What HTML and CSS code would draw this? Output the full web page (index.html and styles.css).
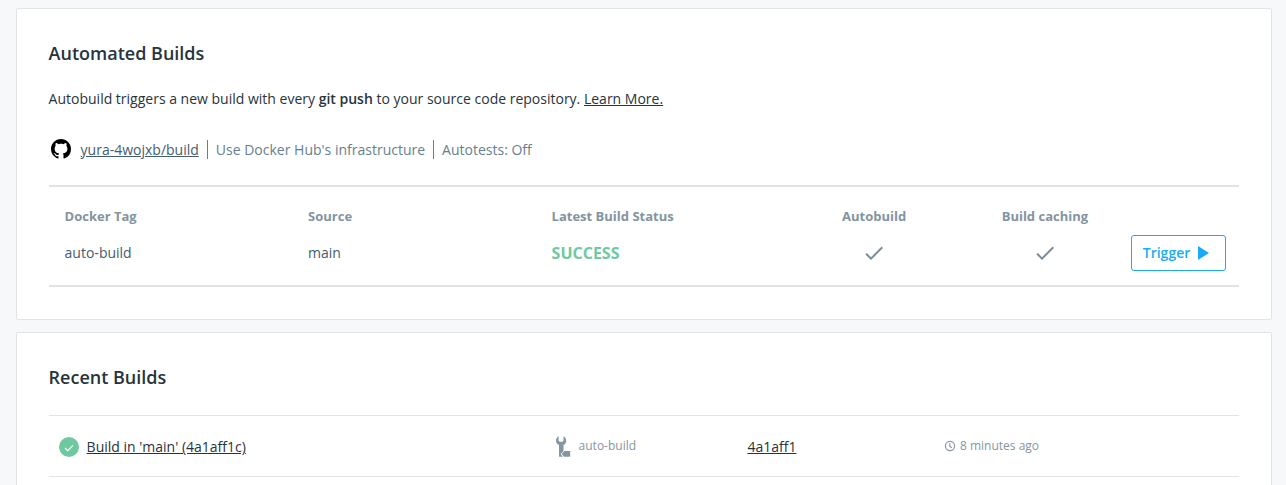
FILE: index.html
```html
<!DOCTYPE html>
<html lang="en">
<head>
<meta charset="utf-8">
<title>Builds</title>
<link rel="stylesheet" href="styles.css">
</head>
<body>
<main class="page">
  <section class="card automated">
    <h2 class="title">Automated Builds</h2>
    <p class="intro">Autobuild triggers a new build with every <strong>git push</strong> to your source code repository. <a href="#">Learn More.</a></p>
    <div class="meta">
      <svg class="github" viewBox="0 0 16 16"><path d="M8 0C3.58 0 0 3.58 0 8c0 3.54 2.29 6.53 5.47 7.59.4.07.55-.17.55-.38 0-.19-.01-.82-.01-1.49-2.01.37-2.53-.49-2.69-.94-.09-.23-.48-.94-.82-1.13-.28-.15-.68-.52-.01-.53.63-.01 1.08.58 1.23.82.72 1.21 1.87.87 2.33.66.07-.52.28-.87.51-1.07-1.78-.2-3.64-.89-3.64-3.95 0-.87.31-1.59.82-2.15-.08-.2-.36-1.02.08-2.12 0 0 .67-.21 2.2.82.64-.18 1.32-.27 2-.27s1.36.09 2 .27c1.53-1.04 2.2-.82 2.2-.82.44 1.1.16 1.92.08 2.12.51.56.82 1.27.82 2.15 0 3.07-1.87 3.75-3.65 3.95.29.25.54.73.54 1.48 0 1.07-.01 1.93-.01 2.2 0 .21.15.46.55.38A8.01 8.01 0 0 0 16 8c0-4.42-3.58-8-8-8z"/></svg>
      <a class="repo" href="#">yura-4wojxb/build</a>
      <span class="meta-item">Use Docker Hub's infrastructure</span>
      <span class="meta-item">Autotests: Off</span>
    </div>
    <div class="rules">
      <div class="cols head">
        <span>Docker Tag</span><span>Source</span><span>Latest Build Status</span>
        <span class="center">Autobuild</span><span class="center">Build caching</span><span></span>
      </div>
      <div class="cols row">
        <span>auto-build</span><span>main</span><span class="success">SUCCESS</span>
        <span class="center"><svg class="check" viewBox="0 0 24 24"><path d="M9 16.17L4.83 12l-1.42 1.41L9 19 21 7l-1.41-1.41z"/></svg></span>
        <span class="center"><svg class="check" viewBox="0 0 24 24"><path d="M9 16.17L4.83 12l-1.42 1.41L9 19 21 7l-1.41-1.41z"/></svg></span>
        <button class="trigger">Trigger<svg class="play" viewBox="0 0 11 14"><path d="M0 0v14l11-7z"/></svg></button>
      </div>
    </div>
  </section>
  <section class="card recent">
    <h2 class="title">Recent Builds</h2>
    <div class="build">
      <div class="build-name">
        <svg class="badge" viewBox="0 0 20 20"><circle cx="10" cy="10" r="10"/><path d="M6 11l2.7 2.7L14 8.3"/></svg>
        <a href="#">Build in 'main' (4a1aff1c)</a>
      </div>
      <div class="build-tag">
        <svg class="wrench" viewBox="0 0 15 21"><path d="M2.600.3V4.800l1.200 1h2.500l1.200-1V.3C9.200 1 10.200 2.500 10.200 4.700c0 2-1 3.500-2.700 4.300v6.200L4.600 18l2.300 2.700H3V9C1.200 8.200 0 6.700 0 4.700 0 2.500 1.100 1 2.600.3z"/><path d="M5.600 18l2.800-3h5.200c.3 0 .6.3.6.6v4.500c0 .3-.3.6-.6.6H8.200z"/></svg>
        <span>auto-build</span>
      </div>
      <div class="build-commit"><a href="#">4a1aff1</a></div>
      <div class="build-time">
        <svg class="clock" viewBox="0 0 10 10"><circle cx="5" cy="5" r="4.600"/><path d="M4.800 2.300v2.900l2.100 1.500"/></svg>
        <span>8 minutes ago</span>
      </div>
    </div>
  </section>
</main>
</body>
</html>
```
FILE: styles.css
```css
* { box-sizing: border-box; }
body {
  margin: 0;
  background: #f7f8fa;
  color: #27343b;
  font: 14px/20px "Open Sans", sans-serif;
}
a { color: inherit; text-decoration: underline; }
.page {
  display: flex;
  flex-direction: column;
  gap: 12px;
  height: 485px;
  padding: 8px 14px 0 15.600px;
}
.card {
  flex: none;
  background: #fff;
  border: 1px solid #e0e4e7;
  border-radius: 2px;
  padding: 32px;
}
.automated { height: 312px; }
.recent {
  flex: 1;
  padding-bottom: 0;
  border-bottom: 0;
  border-radius: 2px 2px 0 0;
}
.title { margin: 0; font-size: 18px; line-height: 24px; font-weight: 600; }
.intro { margin: 24px 0 0; }
.intro strong { font-weight: 600; }
.meta {
  display: flex;
  align-items: center;
  height: 20px;
  margin-top: 30px;
  padding-left: 2px;
  color: #677f8c;
}
.github { width: 20px; height: 20px; margin-right: 10px; }
.repo { padding-top: 1px; color: #445d6e; }
.meta-item {
  margin-left: 8px;
  padding-left: 8px;
  border-left: 1px solid #677f8c;
  line-height: 19px;
}
.rules {
  height: 102px;
  margin-top: 26px;
  border-top: 2px solid #e0e4e7;
  border-bottom: 2px solid #e0e4e7;
}
.cols {
  display: grid;
  grid-template-columns: 243.500px 243.500px 237.200px 170.600px 171px 95px;
  padding-left: 16px;
  align-items: center;
}
.head { height: 58px; color: #82949f; font-size: 13px; font-weight: 700; }
.row { height: 36px; margin-top: -10px; color: #445d6e; }
.center { display: flex; justify-content: center; }
.success { color: #6ec9a0; font-size: 16px; font-weight: 700; }
.check { width: 24px; height: 24px; fill: #7a8e99; }
.trigger {
  display: flex;
  align-items: center;
  width: 95px;
  height: 36px;
  margin-left: 0.400px;
  padding: 0 0 0 11px;
  gap: 8px;
  background: #fff;
  border: 1px solid #1aaaf8;
  border-radius: 3px;
  color: #1aaaf8;
  font: 600 14px/20px "Open Sans", sans-serif;
}
.play { width: 11px; height: 14px; fill: #1aaaf8; }
.build {
  display: grid;
  grid-template-columns: 497px 191.800px 197.600px 1fr;
  align-items: center;
  height: 62px;
  margin-top: 26px;
  padding-left: 10px;
  border-top: 1px solid #e0e4e4;
  border-bottom: 1px solid #e0e4e4;
}
.build-name, .build-tag, .build-time { display: flex; align-items: center; }
.build-name { gap: 8px; padding-top: 2px; }
.build-commit { padding-top: 2px; }
.build-tag, .build-time { color: #8496a1; font-size: 12px; }
.badge { width: 20px; height: 20px; fill: #6ec9a0; }
.badge path { fill: none; stroke: #fff; stroke-width: 1.100; }
.wrench { width: 15px; height: 21px; margin-right: 8px; fill: #8496a1; }
.build-time { gap: 5px; }
.clock { width: 10px; height: 10px; fill: none; stroke: #8496a1; stroke-width: 1.150; overflow: visible; }
```
